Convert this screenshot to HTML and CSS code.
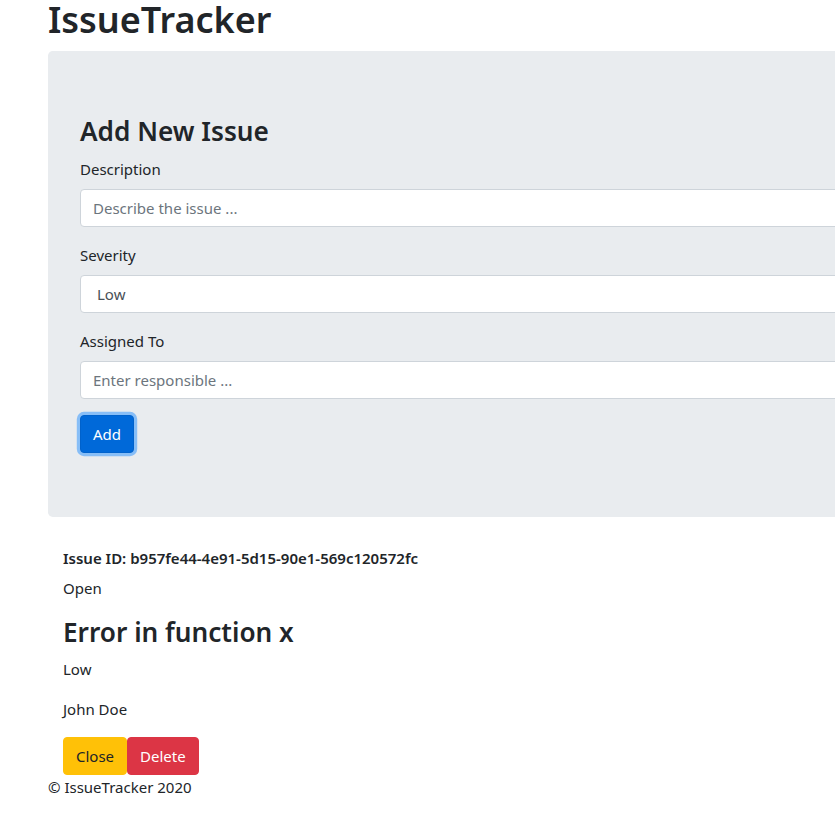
FILE: index.html
```html
<!DOCTYPE html>
<html lang="en">
<head>
<meta charset="utf-8">
<title>IssueTracker</title>
<link rel="stylesheet" href="styles.css">
</head>
<body>
<div class="container">
  <h1 class="title">IssueTracker</h1>
  <div class="jumbotron">
    <h3 class="h3">Add New Issue</h3>
    <form class="form">
      <div class="form-group">
        <label class="label" for="desc">Description</label>
        <input class="form-control" id="desc" type="text" placeholder="Describe the issue ...">
      </div>
      <div class="form-group">
        <label class="label" for="sev">Severity</label>
        <div class="form-control select">Low</div>
      </div>
      <div class="form-group">
        <label class="label" for="assign">Assigned To</label>
        <input class="form-control" id="assign" type="text" placeholder="Enter responsible ...">
      </div>
      <button type="button" class="btn btn-primary focus">Add</button>
    </form>
  </div>
  <div class="issue">
    <h6 class="h6">Issue ID: b957fe44-4e91-5d15-90e1-569c120572fc</h6>
    <p class="p">Open</p>
    <h3 class="h3">Error in function x</h3>
    <p class="p">Low</p>
    <p class="p">John Doe</p>
    <div class="actions">
      <button type="button" class="btn btn-warning">Close</button><button type="button" class="btn btn-danger">Delete</button>
    </div>
  </div>
  <div class="footer">© IssueTracker 2020</div>
</div>
</body>
</html>
```
FILE: styles.css
```css
html, body {
  margin: 0;
  padding: 0;
  overflow: hidden;
  background: #fff;
}
body {
  font-family: "Noto Sans", "Open Sans", sans-serif;
  font-size: 15px;
  line-height: 24px;
  color: #212529;
}
.container {
  width: 1110px;
  margin: 0 0 0 33px;
  padding: 0 15px;
}
.title {
  font-size: 36px;
  line-height: 36px;
  padding-top: 2px;
  font-weight: 600;
  margin: 0 0 13px;
}
.jumbotron {
  background: #e9ecef;
  border-radius: 4.8px;
  padding: 64px 32px;
  margin-bottom: 32px;
}
.h3 {
  font-size: 26.2px;
  line-height: 33.6px;
  font-weight: 600;
  margin: 0 0 8px;
}
.h6 {
  font-size: 15px;
  line-height: 19.2px;
  font-weight: 600;
  margin: 0 0 8px;
}
.p {
  margin: 0 0 16px;
}
.form-group {
  margin-bottom: 16px;
}
.label {
  display: block;
  margin-bottom: 8px;
}
.form-control {
  display: block;
  box-sizing: border-box;
  width: 100%;
  height: 38px;
  padding: 6px 12px;
  font-family: inherit;
  font-size: 15px;
  line-height: 24px;
  color: #495057;
  background: #fff;
  border: 1px solid #ced4da;
  border-radius: 4px;
}
.form-control::placeholder {
  color: #6c757d;
}
.select {
  padding-left: 16px;
}
.btn {
  display: inline-block;
  font-family: inherit;
  font-size: 15px;
  line-height: 24px;
  padding: 6px 12px;
  border: 1px solid transparent;
  border-radius: 4px;
  cursor: pointer;
}
.btn-primary {
  color: #fff;
  background: #0069d9;
  border-color: #0062cc;
}
.focus {
  box-shadow: 0 0 0 3.2px rgba(38, 143, 255, 0.5);
}
.btn-warning {
  color: #212529;
  background: #ffc107;
  border-color: #ffc107;
}
.btn-danger {
  color: #fff;
  background: #dc3545;
  border-color: #dc3545;
}
.issue {
  padding: 0 15px;
}
.actions {
  display: flex;
}
.footer {
  line-height: 24px;
}
```
